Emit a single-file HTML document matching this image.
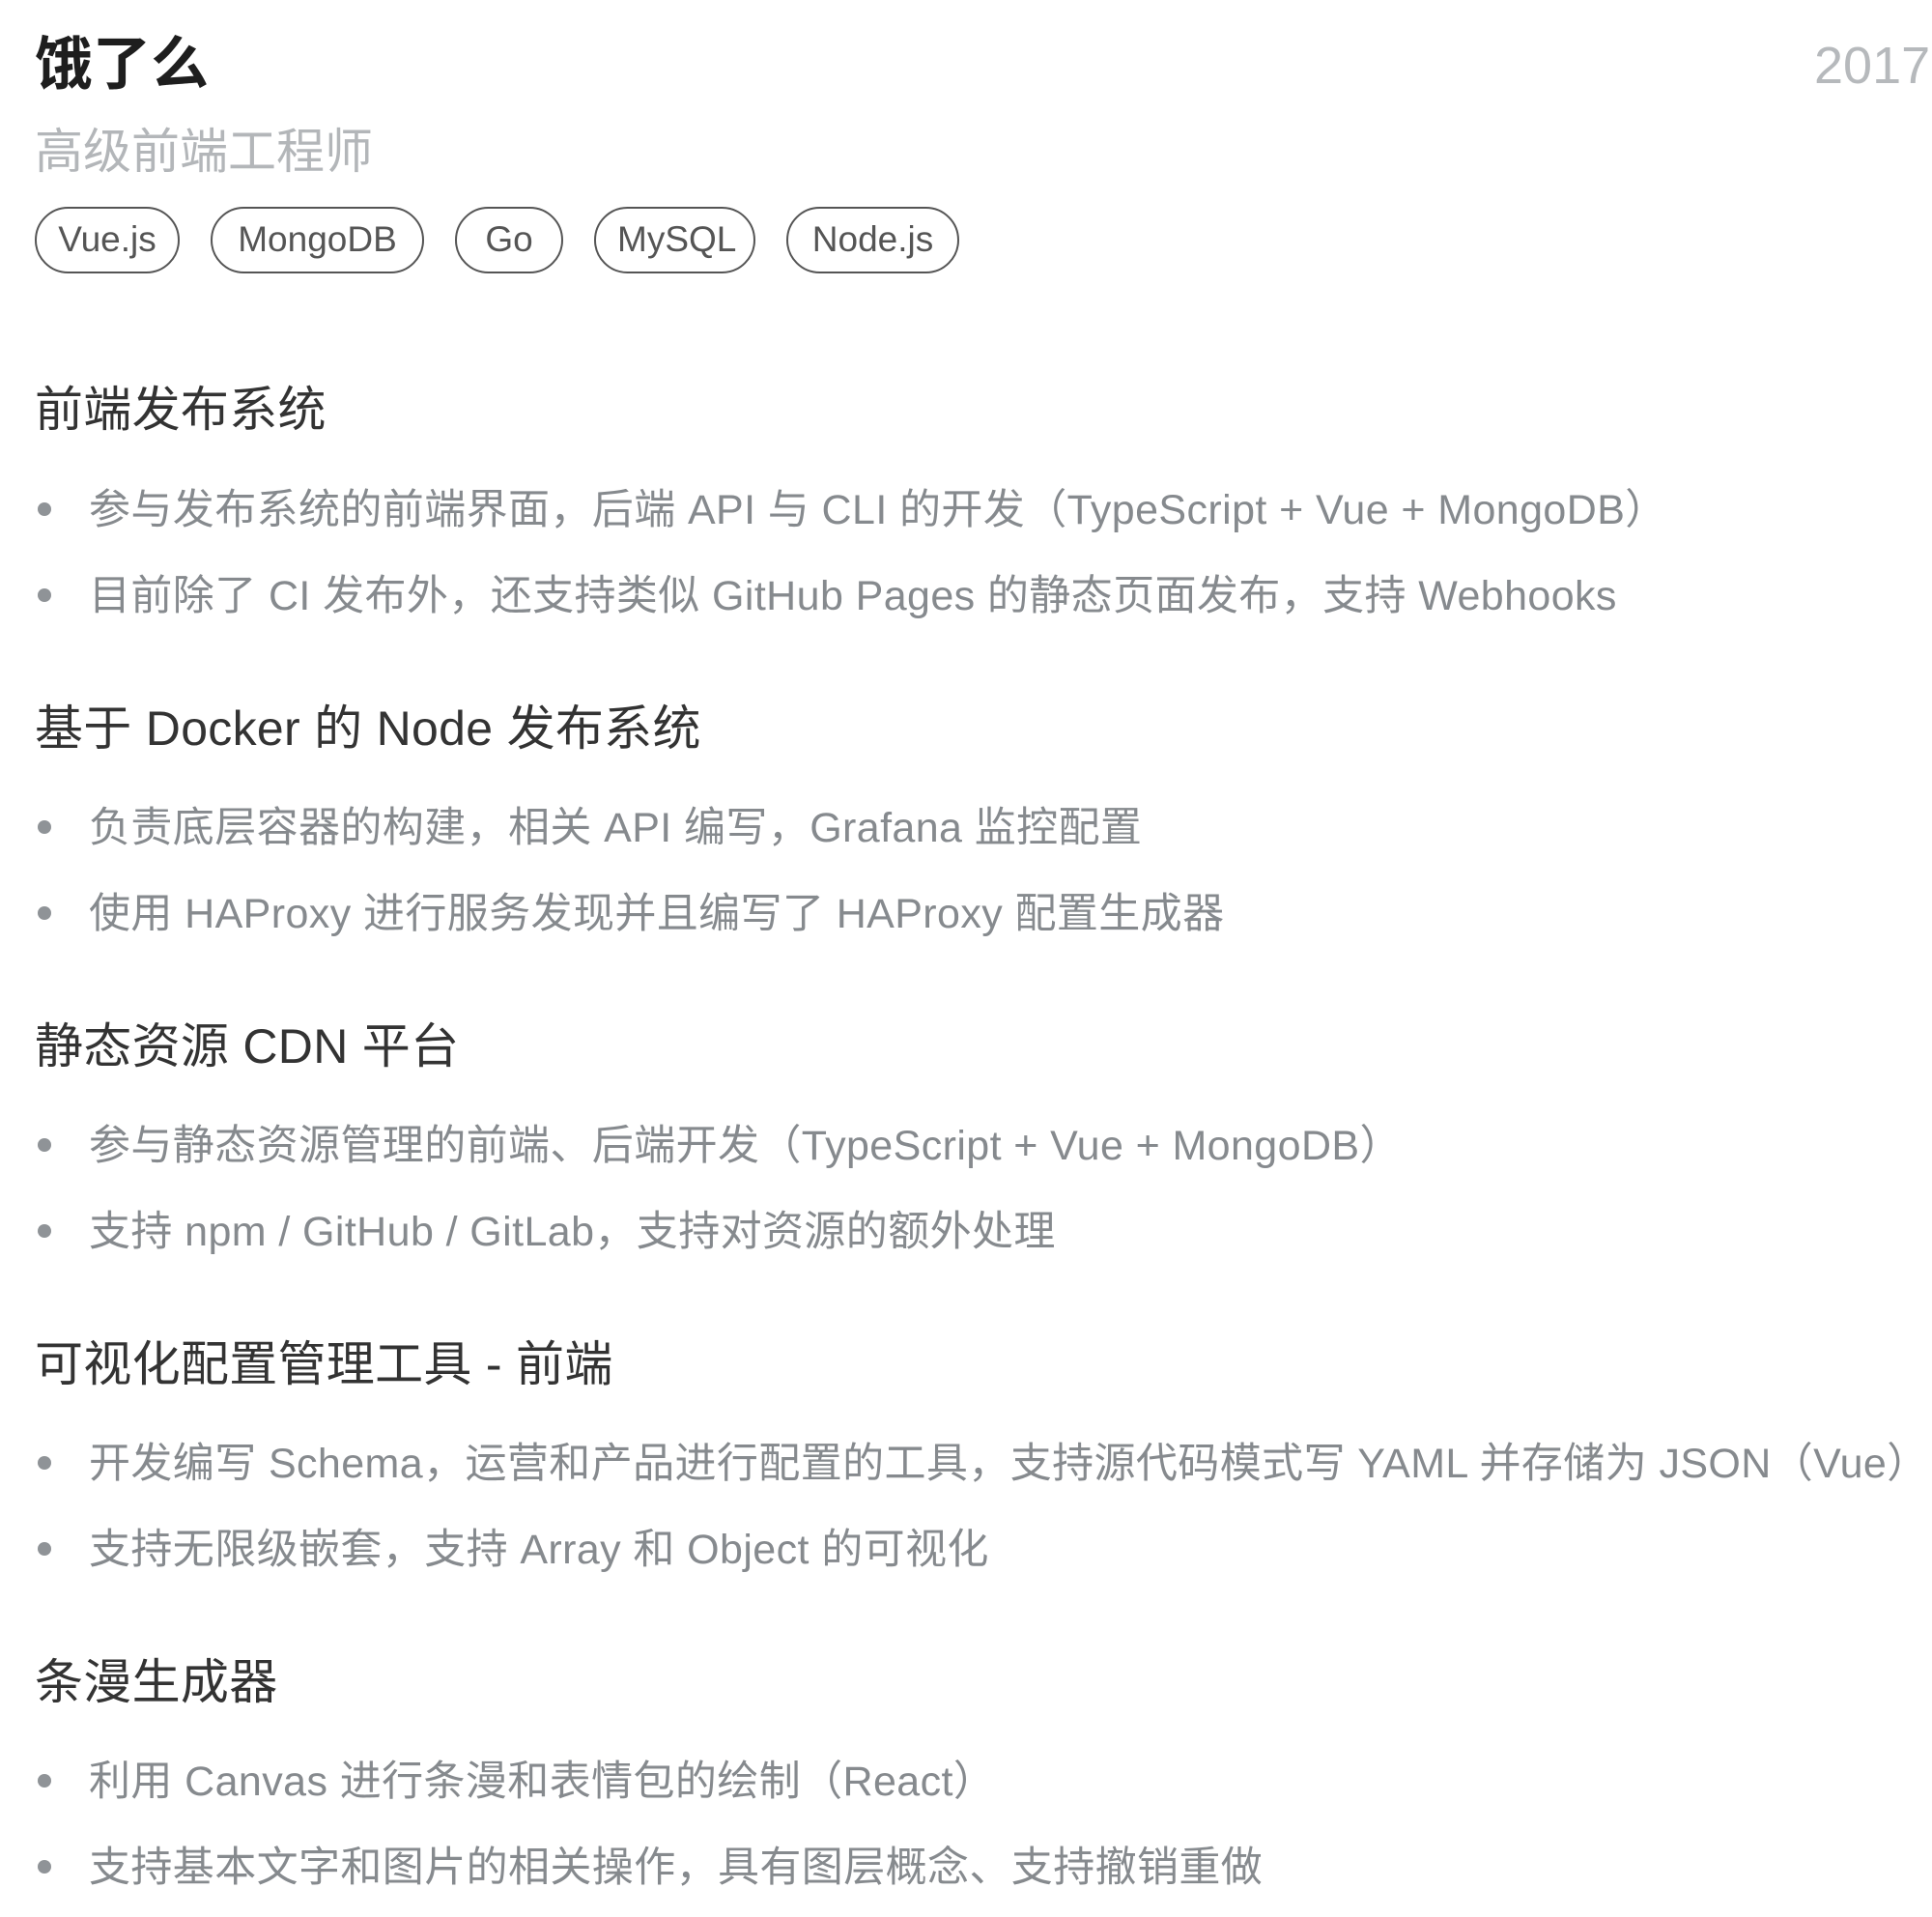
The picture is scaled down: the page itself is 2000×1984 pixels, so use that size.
<!DOCTYPE html>
<html><head><meta charset="utf-8"><style>
html,body{margin:0;padding:0;background:#fff;width:2000px;height:1984px;overflow:hidden;position:relative;font-family:"Liberation Sans","Noto Sans CJK SC",sans-serif;}
.a{position:absolute;white-space:nowrap;}
.t{left:36px;top:37px;font-size:60px;line-height:60px;font-weight:bold;color:#1e1e1e;}
.s{left:36px;top:132px;font-size:50px;line-height:50px;color:#b3b6b9;}
.d{left:1878px;top:38px;font-size:54px;line-height:60px;color:#b6b9bc;}
.tags{left:36px;top:214px;display:flex;gap:32px;}
.tag{box-sizing:border-box;height:69px;border:2.5px solid #555;border-radius:35px;font-size:37px;line-height:64px;color:#555;padding:0 22px;text-align:center;}
.h{left:36px;font-size:50px;line-height:50px;color:#333;letter-spacing:0.3px;}
.b{left:92px;font-size:43px;line-height:44px;color:#868a8e;letter-spacing:0.4px;}
.dot{position:absolute;left:39px;width:14px;height:14px;border-radius:50%;background:#8f9397;}
</style></head><body>
<div class="a t">饿了么</div>
<div class="a s">高级前端工程师</div>
<div class="a d">2017-</div>
<div class="a tags">
<div class="tag" style="width:150px">Vue.js</div>
<div class="tag" style="width:221px">MongoDB</div>
<div class="tag" style="width:112px">Go</div>
<div class="tag" style="width:167px">MySQL</div>
<div class="tag" style="width:179px">Node.js</div>
</div>

<div class="a h" style="top:399px">前端发布系统</div>
<div class="dot" style="top:520px"></div><div class="a b" style="top:506px">参与发布系统的前端界面，后端 API 与 CLI 的开发（TypeScript + Vue + MongoDB）</div>
<div class="dot" style="top:609px"></div><div class="a b" style="top:595px">目前除了 CI 发布外，还支持类似 GitHub Pages 的静态页面发布，支持 Webhooks</div>

<div class="a h" style="top:729px">基于 Docker 的 Node 发布系统</div>
<div class="dot" style="top:849px"></div><div class="a b" style="top:835px">负责底层容器的构建，相关 API 编写，Grafana 监控配置</div>
<div class="dot" style="top:938px"></div><div class="a b" style="top:924px">使用 HAProxy 进行服务发现并且编写了 HAProxy 配置生成器</div>

<div class="a h" style="top:1058px">静态资源 CDN 平台</div>
<div class="dot" style="top:1178px"></div><div class="a b" style="top:1164px">参与静态资源管理的前端、后端开发（TypeScript + Vue + MongoDB）</div>
<div class="dot" style="top:1267px"></div><div class="a b" style="top:1253px">支持 npm / GitHub / GitLab，支持对资源的额外处理</div>

<div class="a h" style="top:1387px">可视化配置管理工具 - 前端</div>
<div class="dot" style="top:1507px"></div><div class="a b" style="top:1493px">开发编写 Schema，运营和产品进行配置的工具，支持源代码模式写 YAML 并存储为 JSON（Vue）</div>
<div class="dot" style="top:1596px"></div><div class="a b" style="top:1582px">支持无限级嵌套，支持 Array 和 Object 的可视化</div>

<div class="a h" style="top:1716px">条漫生成器</div>
<div class="dot" style="top:1836px"></div><div class="a b" style="top:1822px">利用 Canvas 进行条漫和表情包的绘制（React）</div>
<div class="dot" style="top:1925px"></div><div class="a b" style="top:1911px">支持基本文字和图片的相关操作，具有图层概念、支持撤销重做</div>
</body></html>
